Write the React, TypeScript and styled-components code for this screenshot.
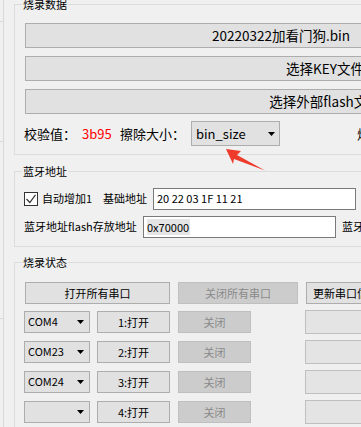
import React from "react";
import styled, { createGlobalStyle } from "styled-components";

const GlobalStyle = createGlobalStyle`
  html, body { margin: 0; padding: 0; background: #f0f0f0; }
  body { font-family: "Noto Sans CJK SC", "Noto Sans", sans-serif; color: #000; }
  * { box-sizing: border-box; }
`;

const FONT = `"Noto Sans CJK SC", "Noto Sans", sans-serif`;

const Window = styled.div`
  position: relative;
  width: 361px;
  height: 427px;
  overflow: hidden;
  display: flex;
  background: #f0f0f0;
`;

const Strip = styled.div`
  flex: none;
  width: 4px;
  border-right: 1px solid #d9d9d9;
  display: flex;
  flex-direction: column;
`;

const StripCell = styled.div<{ $h: number }>`
  flex: none;
  height: ${(p) => p.$h}px;
  border-bottom: 1px solid #d9d9d9;
`;

const Main = styled.div`
  flex: none;
  padding-left: 10px;
  display: flex;
  flex-direction: column;
  align-items: flex-start;
`;

const Group = styled.fieldset<{ $mt: number; $pt: number; $pb: number }>`
  flex: none;
  width: 720px;
  min-width: 0;
  margin: ${(p) => p.$mt}px 0 0 0;
  padding: ${(p) => p.$pt}px 0 ${(p) => p.$pb}px 10px;
  border: 1px solid #dcdcdc;
  border-right: none;
`;

const Legend = styled.legend`
  margin-left: -3px;
  padding: 0 1px;
  height: 17px;
  font-family: ${FONT};
  font-size: 11px;
  line-height: 17px;
  color: #000;
`;

const Stack = styled.div<{ $gap: number }>`
  display: flex;
  flex-direction: column;
  align-items: flex-start;
  gap: ${(p) => p.$gap}px;
`;

const Row = styled.div<{ $h: number; $fs: number; $mt?: number }>`
  display: flex;
  align-items: center;
  height: ${(p) => p.$h}px;
  margin-top: ${(p) => p.$mt ?? 0}px;
  font-size: ${(p) => p.$fs}px;
  white-space: nowrap;
`;

const FileButton = styled.button<{ $w: number }>`
  flex: none;
  width: ${(p) => p.$w}px;
  height: 25px;
  padding: 0;
  background: #e1e1e1;
  border: 1px solid #adadad;
  font-family: ${FONT};
  font-size: 13.5px;
  line-height: 23px;
  color: #000;
  text-align: center;
  white-space: nowrap;
`;

const Label = styled.span<{ $w?: number; $ml?: number }>`
  flex: none;
  ${(p) => (p.$w ? `width: ${p.$w}px;` : "")}
  margin-left: ${(p) => p.$ml ?? 0}px;
  white-space: nowrap;
  line-height: 1.2;
  color: #000;
`;

const Value = styled(Label)`
  color: #ff0000;
`;

const Combo = styled.div<{ $w: number; $h: number; $pl: number; $pr: number; $ml?: number }>`
  flex: none;
  display: flex;
  align-items: center;
  justify-content: space-between;
  width: ${(p) => p.$w}px;
  height: ${(p) => p.$h}px;
  margin-left: ${(p) => p.$ml ?? 0}px;
  padding: 0 ${(p) => p.$pr}px 0 ${(p) => p.$pl}px;
  background: #e1e1e1;
  border: 1px solid #adadad;
  line-height: 1.2;
`;

const Arrow = styled.svg`
  flex: none;
  display: block;
`;

const Check = styled.span<{ $ml?: number }>`
  flex: none;
  width: 14px;
  height: 14px;
  margin-left: ${(p) => p.$ml ?? 0}px;
  background: #fff;
  border: 1px solid #333;
  display: flex;
`;

const TextBox = styled.div<{ $w: number }>`
  flex: none;
  width: ${(p) => p.$w}px;
  height: 22px;
  padding-left: 3px;
  background: #fff;
  border: 1px solid #7a7a7a;
  display: flex;
  align-items: center;
  font-size: 11px;
  line-height: 1.2;
`;

const Selected = styled.span`
  background: #e5e5e5;
  line-height: 16px;
  padding-right: 1px;
`;

const SmallButton = styled.button<{ $w: number; $ml?: number }>`
  flex: none;
  width: ${(p) => p.$w}px;
  height: 22px;
  margin-left: ${(p) => p.$ml ?? 0}px;
  padding: 0;
  background: #e1e1e1;
  border: 1px solid #adadad;
  font-family: ${FONT};
  font-size: 11px;
  line-height: 20px;
  color: #000;
  text-align: center;
  white-space: nowrap;
  &:disabled {
    background: #cccccc;
    border-color: #bfbfbf;
    color: #8a8a8a;
  }
`;

const Slot = styled.div<{ $w: number; $ml: number }>`
  flex: none;
  width: ${(p) => p.$w}px;
  height: 24px;
  margin-left: ${(p) => p.$ml}px;
  background: #e4e4e4;
  border: 1px solid #bfbfbf;
`;

const Annotation = styled.svg`
  position: absolute;
  left: 222px;
  top: 146px;
  pointer-events: none;
`;

const DownArrow = () => (
  <Arrow width="7" height="4" viewBox="0 0 7 4">
    <polygon points="0,0 7,0 3.5,4" fill="#000" />
  </Arrow>
);

const ports = [
  { name: "COM4", n: 1 },
  { name: "COM23", n: 2 },
  { name: "COM24", n: 3 },
  { name: "", n: 4 },
];

export default function App() {
  return (
    <Window>
      <GlobalStyle />
      <Strip>
        <StripCell $h={22} />
        <StripCell $h={120} />
        <StripCell $h={177} />
      </Strip>
      <Main>
        <Group $mt={-4} $pt={10} $pb={8}>
          <Legend>烧录数据</Legend>
          <Stack $gap={8}>
            <FileButton $w={512}>20220322加看门狗.bin</FileButton>
            <FileButton $w={600}>选择KEY文件</FileButton>
            <FileButton $w={600}>选择外部flash文件</FileButton>
          </Stack>
          <Row $h={25} $fs={13} $mt={7}>
            <Label $w={58} $ml={-1}>校验值：</Label>
            <Value $w={38}>3b95</Value>
            <Label $w={71}>擦除大小：</Label>
            <Combo $w={89} $h={25} $pl={4} $pr={4}>
              <span>bin_size</span>
              <DownArrow />
            </Combo>
            <Label $ml={77}>烧录</Label>
          </Row>
        </Group>

        <Group $mt={8} $pt={8} $pb={8}>
          <Legend>蓝牙地址</Legend>
          <Stack $gap={6}>
            <Row $h={22} $fs={11}>
              <Check $ml={-1}>
                <svg width="12" height="12" viewBox="0 0 12 12">
                  <polyline
                    points="1.5,6 4.8,9.5 10.5,1.8"
                    fill="none"
                    stroke="#333"
                    strokeWidth="1.2"
                  />
                </svg>
              </Check>
              <Label $w={61} $ml={4}>自动增加1</Label>
              <Label $w={50}>基础地址</Label>
              <TextBox $w={203}>20 22 03 1F 11 21</TextBox>
            </Row>
            <Row $h={22} $fs={11}>
              <Label $w={119} $ml={-1}>蓝牙地址flash存放地址</Label>
              <TextBox $w={193}>
                <Selected>0x70000</Selected>
              </TextBox>
              <Label $ml={6}>蓝牙地址</Label>
            </Row>
          </Stack>
        </Group>

        <Group $mt={7} $pt={11} $pb={20}>
          <Legend>烧录状态</Legend>
          <Stack $gap={8}>
            <Row $h={22} $fs={11}>
              <SmallButton $w={145}>打开所有串口</SmallButton>
              <SmallButton $w={120} $ml={8} disabled>
                关闭所有串口
              </SmallButton>
              <SmallButton $w={80} $ml={8}>更新串口信息</SmallButton>
            </Row>
            {ports.map((p, i) => (
              <Row key={p.n} $h={22} $fs={11} $mt={i === 0 ? -1 : 0}>
                <Combo $w={66} $h={22} $pl={3} $pr={5} $ml={-1}>
                  <span>{p.name}</span>
                  <DownArrow />
                </Combo>
                <SmallButton $w={73} $ml={7}>{p.n}:打开</SmallButton>
                <SmallButton $w={73} $ml={8} disabled>
                  关闭
                </SmallButton>
                <Slot $w={80} $ml={54} />
              </Row>
            ))}
          </Stack>
        </Group>
      </Main>
      <Annotation width="46" height="28" viewBox="0 0 46 28">
        <polygon points="4,3 19,5 15,9 43,24.5 12,13 11,18" fill="#ee3b2c" />
      </Annotation>
    </Window>
  );
}
